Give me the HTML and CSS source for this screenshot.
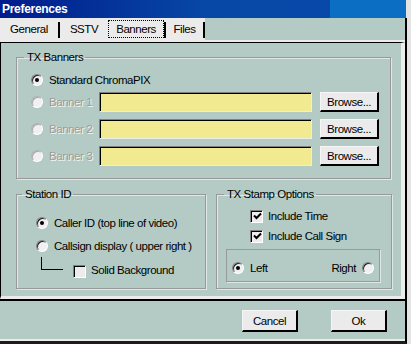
FILE: index.html
```html
<!DOCTYPE html>
<html lang="en">
<head>
  <meta charset="UTF-8">
  <meta name="viewport" content="width=device-width, initial-scale=1.0">
  <title>Preferences</title>
  <link rel="stylesheet" href="styles.css">
</head>
<body>
  <div class="window">
    <div class="titlebar">Preferences</div>
    <div class="frame">
      <div class="tabs">
        <div class="tab tab-general">General</div>
        <div class="tab tab-sstv">SSTV</div>
        <div class="tab tab-banners"><span class="focus">Banners</span></div>
        <div class="tab tab-files">Files</div>
      </div>

      <div class="page">
        <div class="page-inner">
          <fieldset class="group banners">
            <legend>TX Banners</legend>
            <div class="row row-first">
              <span class="radio checked"></span>
              <span class="label">Standard ChromaPIX</span>
            </div>
            <div class="row banner-row">
              <span class="radio disabled"></span>
              <span class="label banner-label disabled">Banner 1</span>
              <div class="field"></div>
              <button class="btn browse">Browse...</button>
            </div>
            <div class="row banner-row">
              <span class="radio disabled"></span>
              <span class="label banner-label disabled">Banner 2</span>
              <div class="field"></div>
              <button class="btn browse">Browse...</button>
            </div>
            <div class="row banner-row">
              <span class="radio disabled"></span>
              <span class="label banner-label disabled">Banner 3</span>
              <div class="field"></div>
              <button class="btn browse">Browse...</button>
            </div>
          </fieldset>

          <div class="lower">
            <fieldset class="group station">
              <legend>Station ID</legend>
              <div class="row opt-row">
                <span class="radio checked"></span>
                <span class="label">Caller ID (top line of video)</span>
              </div>
              <div class="row opt-row">
                <span class="radio"></span>
                <span class="label">Callsign display ( upper right )</span>
              </div>
              <div class="row solid-row">
                <span class="elbow"></span>
                <span class="check"></span>
                <span class="label">Solid Background</span>
              </div>
            </fieldset>

            <fieldset class="group stamp">
              <legend>TX Stamp Options</legend>
              <div class="row check-row">
                <span class="check checked">
                  <svg width="9" height="9" viewBox="0 0 9 9"><polyline points="1,3.5 3.5,6 8,1.5" fill="none" stroke="#000" stroke-width="2"/></svg>
                </span>
                <span class="label">Include Time</span>
              </div>
              <div class="row check-row">
                <span class="check checked">
                  <svg width="9" height="9" viewBox="0 0 9 9"><polyline points="1,3.5 3.5,6 8,1.5" fill="none" stroke="#000" stroke-width="2"/></svg>
                </span>
                <span class="label">Include Call Sign</span>
              </div>
              <div class="side-box">
                <span class="radio checked"></span>
                <span class="label">Left</span>
                <span class="spacer"></span>
                <span class="label">Right</span>
                <span class="radio"></span>
              </div>
            </fieldset>
          </div>
        </div>
      </div>

      <div class="footer">
        <button class="btn dlg-btn">Cancel</button>
        <button class="btn dlg-btn">Ok</button>
      </div>
    </div>
  </div>
</body>
</html>
```

FILE: styles.css
```css
body {
  margin: 0;
  font-family: "Liberation Sans", Arial, sans-serif;
  font-size: 11.5px;
  letter-spacing: -0.45px;
  color: #000;
  background-color: #e4e4e4;
}

.window {
  width: 411px;
  height: 344px;
  display: flex;
  flex-direction: column;
  background-color: #e4e4e4;
  overflow: hidden;
}

.titlebar {
  width: 406px;
  height: 18px;
  line-height: 18px;
  padding-left: 2px;
  box-sizing: border-box;
  font-size: 12px;
  font-weight: bold;
  letter-spacing: -0.3px;
  color: #fff;
  background: linear-gradient(to right, #001b8c 0, #0747a5 200px, #0848a8 330px, #0b6ec2 330px);
}

.frame {
  width: 407px;
  flex: 1;
  display: flex;
  flex-direction: column;
  background-color: #b4cbc5;
  border-right: 2px solid #000;
  border-bottom: 3px solid #1c1c1c;
  box-sizing: border-box;
}

/* tabs */
.tabs {
  height: 22px;
  display: flex;
}

.tab {
  height: 22px;
  line-height: 23px;
  background-color: #ebebeb;
  text-align: center;
  box-sizing: border-box;
  background-image: linear-gradient(#000, #000);
  background-size: 2px 16px;
  background-position: right 4px;
  background-repeat: no-repeat;
}

.tab-general { width: 60px; padding-right: 2px; }
.tab-sstv { width: 48px; background-image: none; }
.tab-banners { width: 58px; padding: 2px 2px 0 0; }
.tab-files { width: 39px; padding-right: 2px; }

.focus {
  display: block;
  height: 18px;
  line-height: 17px;
  border: 1px dotted #000;
  box-sizing: border-box;
}

/* page */
.page {
  border-top: 2px solid #ebebeb;
}

.page-inner {
  height: 253px;
  border-top: 1px solid #000;
  border-left: 1px solid #000;
  border-right: 4px solid #ebebeb;
  border-bottom: 3px solid #ebebeb;
}

.group {
  margin: 0;
  border: 1px solid #999;
  box-shadow: 1px 1px 0 #dfe8e5, inset 1px 1px 0 #dfe8e5;
  min-width: 0;
  box-sizing: border-box;
}

.group legend {
  margin-left: 7px;
  padding: 0 2px 0 3px;
  line-height: 15px;
}

.banners {
  margin: 7px 0 0 15px;
  width: 375px;
  padding: 5px 0 12px 0;
}

.banners .row {
  margin-left: 14px;
}

.row {
  display: flex;
  align-items: center;
}

.row-first {
  height: 20px;
  margin-bottom: 2px;
}

.banner-row {
  height: 20px;
}

.banner-row + .banner-row {
  margin-top: 7px;
}

.label {
  margin-left: 6px;
  white-space: nowrap;
}

.banner-label {
  width: 50px;
}

.disabled {
  color: #9c9c9c;
  text-shadow: 1px 1px 0 #f4f4f4;
}

.field {
  width: 213px;
  height: 20px;
  box-sizing: border-box;
  background-color: #f2ea90;
  border: 1px solid;
  border-color: #808080 #ececec #ececec #808080;
  box-shadow: inset 1px 1px 0 #000;
}

.btn {
  font-family: inherit;
  font-size: inherit;
  letter-spacing: inherit;
  color: #000;
  background-color: #ebebeb;
  border-style: solid;
  border-width: 1px 2px 2px 1px;
  border-color: #f6f6f6 #000 #000 #f6f6f6;
  padding: 0;
  box-sizing: border-box;
}

.browse {
  width: 59px;
  height: 20px;
  margin-left: 8px;
}

/* radios and checks */
.radio {
  flex: none;
  width: 12px;
  height: 12px;
  box-sizing: border-box;
  border-radius: 50%;
  border: 1px solid;
  border-color: #808080 #fff #fff #808080;
  box-shadow: inset 1px 1px 0 #222;
  background-color: #f0f0f0;
  display: flex;
  align-items: center;
  justify-content: center;
}

.radio.checked::after {
  content: "";
  width: 4px;
  height: 4px;
  border-radius: 50%;
  background-color: #000;
}

.radio.disabled {
  border-color: #b0b0b0 #fff #fff #b0b0b0;
  box-shadow: inset 1px 1px 0 #a8a8a8;
}

.check {
  flex: none;
  width: 13px;
  height: 13px;
  box-sizing: border-box;
  border: 1px solid;
  border-color: #808080 #fff #fff #808080;
  box-shadow: inset 1px 1px 0 #000;
  background-color: #ececec;
  display: flex;
  align-items: center;
  justify-content: center;
  padding: 1px 0 0 1px;
}

.check svg {
  display: block;
}

/* lower groups */
.lower {
  display: flex;
  gap: 10px;
  margin: 8px 0 0 15px;
}

.station {
  width: 190px;
  height: 102px;
  padding: 12px 0 0 0;
}

.station legend {
  margin-left: 5px;
}

.station .row {
  margin-left: 19px;
}

.opt-row {
  height: 18px;
}

.opt-row + .opt-row {
  margin-top: 5px;
}

.solid-row {
  height: 22px;
  align-items: flex-start;
  padding-top: 2px;
}

.elbow {
  width: 21px;
  height: 12px;
  margin-left: 5px;
  border-left: 1px solid #000;
  border-bottom: 1px solid #000;
}

.solid-row .check {
  margin: 8px 0 0 10px;
}

.solid-row .label {
  margin-top: 7px;
  margin-left: 5px;
}

.stamp {
  width: 176px;
  height: 102px;
  padding: 6px 0 0 9px;
}

.stamp legend {
  margin-left: -2px;
}

.check-row {
  height: 16px;
  margin-left: 24px;
}

.check-row + .check-row {
  margin-top: 4px;
}

.check-row .label {
  margin-left: 5px;
}

.side-box {
  width: 154px;
  height: 33px;
  margin-top: 5px;
  box-sizing: border-box;
  border: 1px solid #999;
  box-shadow: 1px 1px 0 #dfe8e5;
  display: flex;
  align-items: center;
  padding: 4px 5px 0 5px;
}

.spacer {
  flex: 1;
}

.side-box .label + .radio {
  margin-left: 6px;
}

/* footer */
.footer {
  flex: 1;
  display: flex;
  justify-content: flex-end;
  align-items: flex-start;
  gap: 33px;
  padding: 9px 18px 0 0;
  border-top: 2px solid #000;
  border-bottom: 2px solid #ebebeb;
}

.dlg-btn {
  width: 56px;
  height: 22px;
}
```
